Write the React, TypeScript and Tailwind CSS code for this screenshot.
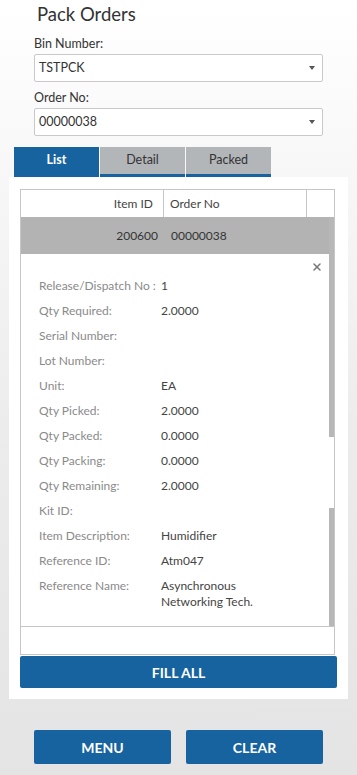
import { X } from 'lucide-react'

const details: [string, string][] = [
  ['Release/Dispatch No :', '1'],
  ['Qty Required:', '2.0000'],
  ['Serial Number:', ''],
  ['Lot Number:', ''],
  ['Unit:', 'EA'],
  ['Qty Picked:', '2.0000'],
  ['Qty Packed:', '0.0000'],
  ['Qty Packing:', '0.0000'],
  ['Qty Remaining:', '2.0000'],
  ['Kit ID:', ''],
  ['Item Description:', 'Humidifier'],
  ['Reference ID:', 'Atm047'],
]

function Select({ value }: { value: string }) {
  return (
    <div className="flex h-[28px] items-center justify-between rounded-[2px] border border-[#c9c9c9] bg-white pl-[4px] pr-[7px] text-[12.5px] text-[#333]">
      <span>{value}</span>
      <span className="h-0 w-0 border-x-[3.5px] border-t-[4px] border-x-transparent border-t-[#555]" />
    </div>
  )
}

export default function App() {
  return (
    <div
      className="min-h-[775px] w-full bg-gradient-to-b from-white via-[#ececec] via-55% to-[#e4e4e4] text-[#333]"
      style={{ fontFamily: 'Lato, "Noto Sans", sans-serif' }}
    >
      <h1 className="pl-[37px] pt-[1px] text-[18.5px] leading-[26px] text-[#333]">Pack Orders</h1>

      <div className="px-[34px] pt-[8px]">
        <label className="block text-[12.5px] leading-[18px] text-[#333]">Bin Number:</label>
        <div className="mt-[1px]">
          <Select value="TSTPCK" />
        </div>
        <label className="mt-[7px] block text-[12.5px] leading-[18px] text-[#333]">Order No:</label>
        <div className="mt-[1px]">
          <Select value="00000038" />
        </div>
      </div>

      {/* tabs */}
      <div className="mt-[11px] flex gap-px px-[14px]">
        <div className="flex h-[30px] w-[85px] items-center justify-center bg-[#1763a0] pb-[3px] text-[12.5px] font-bold text-white">
          List
        </div>
        <div className="flex h-[30px] w-[85px] items-center justify-center border-b-[3px] border-[#1763a0] bg-[#b3b6b9] text-[12.5px] text-[#333]">
          Detail
        </div>
        <div className="flex h-[30px] w-[85px] items-center justify-center border-b-[3px] border-[#1763a0] bg-[#b3b6b9] text-[12.5px] text-[#333]">
          Packed
        </div>
      </div>

      {/* panel */}
      <div className="mx-[9px] bg-white px-[11px] pb-[11px] pt-[12px]">
        <div className="mr-[2px] border border-[#c6c6c6] text-[12px]">
          <div className="flex h-[27px] items-center text-[#444]">
            <div className="flex h-full w-[143px] items-center justify-end border-r border-[#c6c6c6] pr-[10px]">Item ID</div>
            <div className="flex h-full w-[143px] items-center border-r border-[#c6c6c6] pl-[6px]">Order No</div>
            <div className="flex-1" />
          </div>
          <div className="flex">
            <div className="flex-1">
              <div className="flex h-[37px] items-center bg-[#b3b3b3] text-[#333]">
                <div className="w-[143px] pr-[6px] text-right">200600</div>
                <div className="pl-[7px]">00000038</div>
              </div>
              <div className="relative h-[372px] pl-[18px] pt-[24px]">
                <X className="absolute right-[6px] top-[7px] h-[12px] w-[12px] text-[#777]" strokeWidth={3} />
                {details.map(([label, value]) => (
                  <div key={label} className="flex h-[25px] items-start leading-[16px]">
                    <span className="w-[122px] shrink-0 whitespace-nowrap text-[#8a8a8a]">{label}</span>
                    <span className="text-[#444]">{value}</span>
                  </div>
                ))}
                <div className="flex leading-[16px]">
                  <span className="w-[122px] shrink-0 whitespace-nowrap text-[#8a8a8a]">Reference Name:</span>
                  <span className="text-[#444]">
                    Asynchronous
                    <br />
                    Networking Tech.
                  </span>
                </div>
              </div>
            </div>
            <div className="flex w-[5px] flex-col">
              <div className="h-[220px] bg-[#b7b7b7]" />
              <div className="h-[71px] bg-white" />
              <div className="flex-1 bg-[#b7b7b7]" />
            </div>
          </div>
          <div className="h-[28px] border-t border-[#c6c6c6]" />
        </div>
        <button className="mt-px flex h-[32px] w-full items-center justify-center rounded-[2px] bg-[#1763a0] text-[14px] font-bold text-white">
          FILL ALL
        </button>
      </div>

      <div className="flex justify-between px-[34px] pt-[31px]">
        <button className="flex h-[34px] w-[137px] items-center justify-center rounded-[2px] bg-[#1763a0] text-[14px] font-bold text-white">
          MENU
        </button>
        <button className="flex h-[34px] w-[137px] items-center justify-center rounded-[2px] bg-[#1763a0] text-[14px] font-bold text-white">
          CLEAR
        </button>
      </div>
    </div>
  )
}
